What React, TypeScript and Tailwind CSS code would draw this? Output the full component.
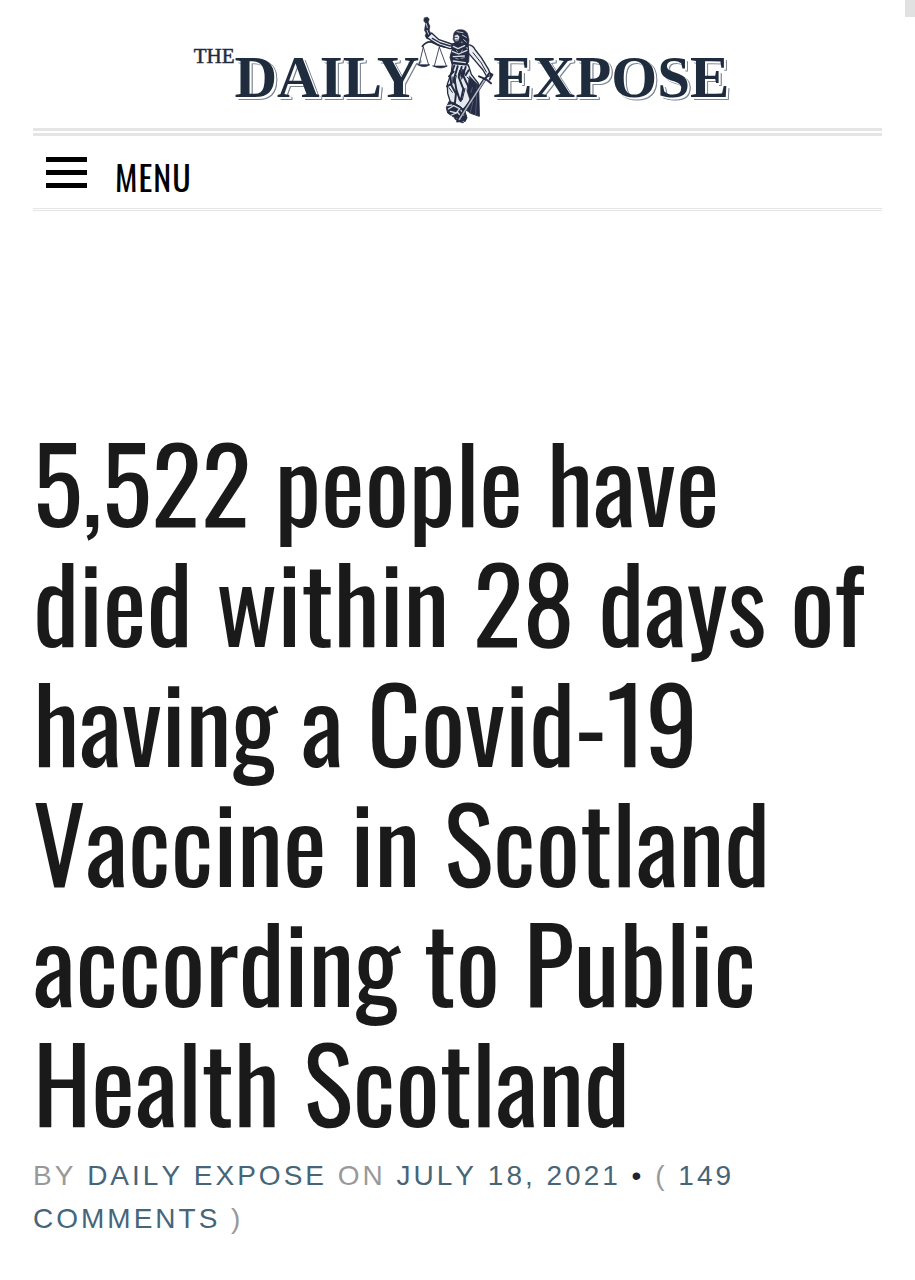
function Justice() {
  return (
    <svg viewBox="0 0 330 390" className="-mr-4 -ml-5 h-[130px] w-[110px] shrink-0" aria-hidden="true">
      <g stroke="#242b42" strokeLinecap="round" strokeLinejoin="round" fill="none">
        {/* raised hand and forearm */}
        <path d="M76 38l9-2 6 6-3 10 5 12-2 12 6 12-3 10-10 4-6-9 3-9-5-8 2-12 2-9-6-7z" fill="#242b42" strokeWidth="1" />
        <path d="M82 56l3 12M84 76l5 12" stroke="#c9ced6" strokeWidth="3" />
        <path d="M84 98L98 84l22 20 38 13 14-2 2 14-22 2-34-11-22-14z" fill="#e9ebef" strokeWidth="4" />
        <path d="M100 100l24 14 30 9" strokeWidth="4" />
        {/* balance */}
        <path d="M70 124Q86 104 104 114T136 126" strokeWidth="5" />
        <path d="M73 126L60 180M73 126l16 54M121 126l-15 57M121 126l21 57" strokeWidth="2.5" />
        <path d="M56 179h36q-16 12-36 0zM102 183h43q-20 12-43 0z" fill="#242b42" strokeWidth="2" />
        {/* head */}
        <path d="M164 88q2-14 20-14 20 0 23 17 5 14 2 25l-12 2-9-9-8 9-12-4-5-10z" fill="#242b42" strokeWidth="2" />
        <path d="M166 91l10-3 6 7-3 13-9 2-4-7z" fill="#e4e7eb" strokeWidth="2" />
        <path d="M166 97h9M170 105h6" strokeWidth="2.5" />
        <path d="M174 80l18 3M190 90l12 7M194 104l8 7M182 112l-2 8" stroke="#b8bfca" strokeWidth="3" />
        {/* torso */}
        <path d="M158 119l22-6 25 3 14 14-9 18-1 22-8 12-42-5-6-20 6-22z" fill="#242b42" strokeWidth="3" />
        <path d="M163 124l14 7 20-9M160 139l19 8 25-11M163 155l33-2M163 168l36 5M204 128l8 7" stroke="#d9dde3" strokeWidth="4" />
        <path d="M172 136l4 5M190 135l-3 6M170 160l8 2M186 160l10-2" stroke="#aab2be" strokeWidth="2.5" />
        {/* sword arm */}
        <path d="M207 119q15 1 22 16l18 23 22 36 6 17-11 5-12-21-22-26-21-24z" fill="#eceef1" strokeWidth="4" />
        <path d="M222 143l25 31 15 27" strokeWidth="3" />
        {/* dark cloak behind the skirt */}
        <path d="M205 240l34-4 2 98-26-9-24-18z" fill="#242b42" strokeWidth="3" />
        {/* skirt */}
        <path d="M160 176l48 4 9 28 20 26-4 40-22 18-16 18-14 14-26-30-9-29-1-27 12-34z" fill="#e6e9ed" strokeWidth="4" />
        <path d="M212 214l22 22-2 40-18 12-10-30z" fill="#242b42" strokeWidth="2" />
        <path d="M166 182l-12 30 3 28 14 26-4 34M176 184l-10 34 6 36 10 30M188 186l-9 30 14 36-8 36M200 186l-8 24 10 22 10 20M209 196l-9 14M158 236l-14 8M150 214l14-14" strokeWidth="6" />
        <path d="M172 212l-4 18M198 250l-8 34M186 236l10 22M160 262l-10-14M204 216l10 10M182 196l-4 14" strokeWidth="3" />
        <path d="M184 206l8-14 6 12-10 18zM162 216l6 20-8-4z" fill="#242b42" strokeWidth="2" />
        {/* gathered hem */}
        <path d="M150 290l-8 18 4 16 18 12 20 6 14 8 6-12-6-18-12-14-20-12z" fill="#242b42" strokeWidth="3" />
        <path d="M148 312l16-10 18 9-10 13-18-5M158 330l18-8 8 10M186 316l8 14M146 302l12-2" stroke="#d9dde3" strokeWidth="4" />
        <path d="M168 340l10 8 14 4M174 350l16-4" strokeWidth="5" />
        {/* sword */}
        <path d="M257 223L178 345" strokeWidth="10" />
        <path d="M256 226L181 343" stroke="#aeb5c1" strokeWidth="5" />
        <path d="M240 214l21 9 15 12M258 222l13-18 9 5-8 14" strokeWidth="6" />
        <path d="M213 325l9-35M230 329l3-60M216 262l4-14" stroke="#69728a" strokeWidth="2" />
      </g>
    </svg>
  );
}

const wordClass =
  "pt-[42px] text-[59px] leading-[60px] font-bold [text-shadow:1px_1px_0_#fff,2px_2px_0_#fff,3px_2px_0_#7d8794,3px_3px_0_#7d8794]";

export default function App() {
  return (
    <div className="relative bg-white px-[33px] font-['Liberation_Sans',sans-serif]">
      <div className="absolute top-0 right-0 h-[17px] w-[10px] bg-[#e1e1e1]" />
      <header>
        <a
          href="#"
          aria-label="The Daily Expose"
          className="flex h-32 items-start justify-center pt-[5px] pl-2 font-['Liberation_Serif',serif] text-[#1f2c3d]"
        >
          <span className="pt-[39px] text-[21px] leading-[24px] [-webkit-text-stroke:0.5px_#1f2c3d]">THE</span>
          <span className={wordClass}>DAILY</span>
          <Justice />
          <span className={wordClass}>EXPOSE</span>
        </a>
        <nav className="border-t-8 border-b-[3px] border-double border-[#e5e5e5]">
          <button type="button" className="flex h-[72px] items-center gap-7 pl-[13px] text-black">
            <span className="flex w-[41px] flex-col gap-2">
              <span className="h-[5px] bg-black" />
              <span className="h-[5px] bg-black" />
              <span className="h-[5px] bg-black" />
            </span>
            <span className="pt-[10px] font-['Oswald',sans-serif] text-[34px] leading-[40px] tracking-[1px]">MENU</span>
          </button>
        </nav>
      </header>
      <main className="pt-[209px] [font-kerning:none]">
        <h1 className="font-['Oswald',sans-serif] text-[104px] leading-[120px] text-[#1a1a1a]">
          5,522 people have died within 28 days of having a Covid-19 Vaccine in Scotland according to Public Health
          Scotland
        </h1>
        <p className="pt-[14px] text-[28px] leading-[43px] tracking-[3px] text-[#999] uppercase">
          By <a href="#" className="text-[#476578]">Daily Expose</a> on{" "}
          <a href="#" className="text-[#476578]">July 18, 2021</a> <span className="text-[#222233]">•</span> ({" "}
          <a href="#" className="text-[#476578]">149 Comments</a> )
        </p>
      </main>
    </div>
  );
}
